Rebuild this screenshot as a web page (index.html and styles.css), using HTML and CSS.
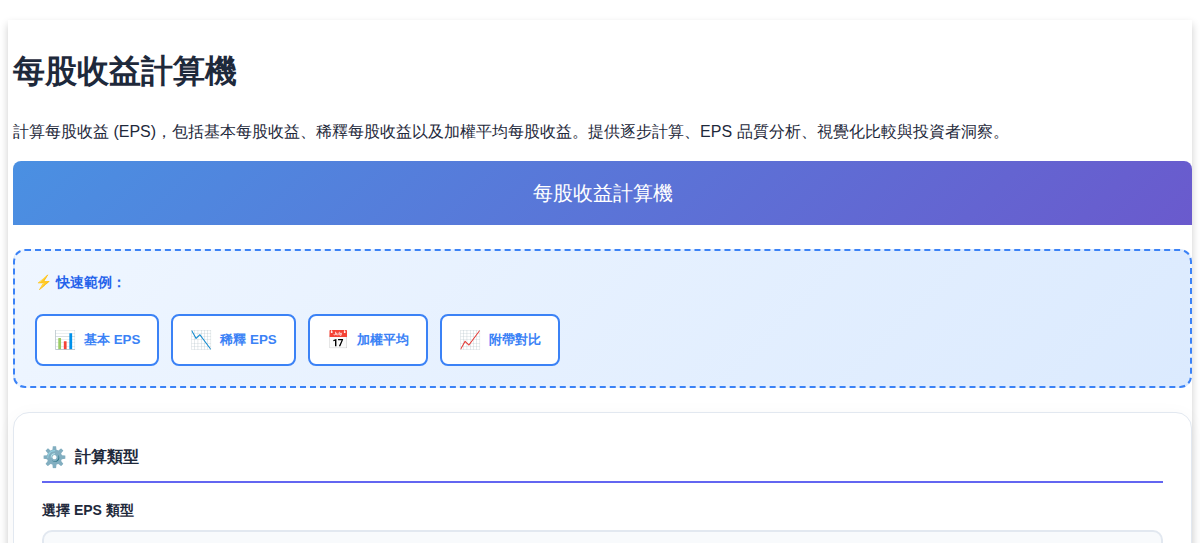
FILE: index.html
```html
<!DOCTYPE html>
<html lang="zh">
<head>
<meta charset="utf-8">
<meta name="viewport" content="width=device-width, initial-scale=1">
<title>每股收益計算機</title>
<link rel="stylesheet" href="styles.css">
</head>
<body>
<div class="page">
<main class="container">
  <h1 class="page-title">每股收益計算機</h1>
  <p class="intro">計算每股收益 (EPS)，包括基本每股收益、稀釋每股收益以及加權平均每股收益。提供逐步計算、EPS 品質分析、視覺化比較與投資者洞察。</p>
  <div class="banner">每股收益計算機</div>
  <section class="examples">
    <div class="examples-title">⚡ 快速範例：</div>
    <div class="examples-list">
      <button class="example" type="button"><span class="example-icon">📊</span>基本 EPS</button>
      <button class="example" type="button"><span class="example-icon">📉</span>稀釋 EPS</button>
      <button class="example" type="button"><span class="example-icon">📅</span>加權平均</button>
      <button class="example" type="button"><span class="example-icon">📈</span>附帶對比</button>
    </div>
  </section>
  <section class="card">
    <h2 class="card-title"><span class="card-icon">⚙️</span>計算類型</h2>
    <label class="label" for="eps-type">選擇 EPS 類型</label>
    <select class="select" id="eps-type">
      <option>基本 EPS</option>
      <option>稀釋 EPS</option>
      <option>加權平均</option>
    </select>
  </section>
</main>
</div>
</body>
</html>
```
FILE: styles.css
```css
* {
  box-sizing: border-box;
}

body {
  margin: 0;
  color: #1e293b;
  font: 16px/26px "Liberation Sans", sans-serif;
}

.page {
  height: 100vh;
  padding: 20px 8px;
  overflow-y: auto;
  background: #fff;
  scrollbar-width: none;
}

.container {
  display: flow-root;
  padding: 5px 0 5px 5px;
  background: #fff;
  box-shadow: 0 4px 8px rgba(0, 0, 0, 0.2);
}

.page-title {
  margin: 21px 0 22px;
  font-size: 32px;
  line-height: 51px;
}

.intro {
  margin: 0 0 16px;
}

.banner {
  padding: 16px;
  border-radius: 8px 8px 0 0;
  background: linear-gradient(135deg, #4a90e2, #6a5acd);
  color: #fff;
  font-size: 20px;
  line-height: 32px;
  text-align: center;
}

.examples {
  margin: 24px 0;
  padding: 20px;
  border: 2px dashed #3b82f6;
  border-radius: 12px;
  background: linear-gradient(135deg, #eff6ff, #dbeafe);
}

.examples-title {
  margin-bottom: 20px;
  color: #2563eb;
  font-size: 14px;
  font-weight: 700;
  line-height: 23px;
}

.examples-list {
  display: flex;
  flex-wrap: wrap;
  gap: 12px;
}

.example {
  display: flex;
  align-items: center;
  gap: 8px;
  padding: 10px 17px;
  border: 2px solid #3b82f6;
  border-radius: 8px;
  background: #fff;
  color: #3b82f6;
  font-family: inherit;
  font-weight: 600;
  cursor: pointer;
}

.example-icon {
  font-size: 18px;
  line-height: 28px;
}

.card {
  min-height: 400px;
  padding: 28px;
  border: 1px solid #e2e8f0;
  border-radius: 16px;
  background: #fff;
  box-shadow: 0 4px 20px rgba(0, 0, 0, 0.04);
}

.card-title {
  display: flex;
  align-items: center;
  gap: 8px;
  margin: 0 0 16px;
  padding-bottom: 8px;
  border-bottom: 2px solid #6366f1;
  font-size: 16px;
}

.card-icon {
  font-size: 20px;
  line-height: 32px;
}

.label {
  display: block;
  margin-bottom: 8px;
  font-size: 14px;
  font-weight: 600;
  line-height: 23px;
}

.select {
  display: block;
  width: 100%;
  padding: 12px 16px;
  border: 2px solid #e2e8f0;
  border-radius: 10px;
  background: #f8fafc;
  color: inherit;
  font: inherit;
  appearance: none;
}
```
